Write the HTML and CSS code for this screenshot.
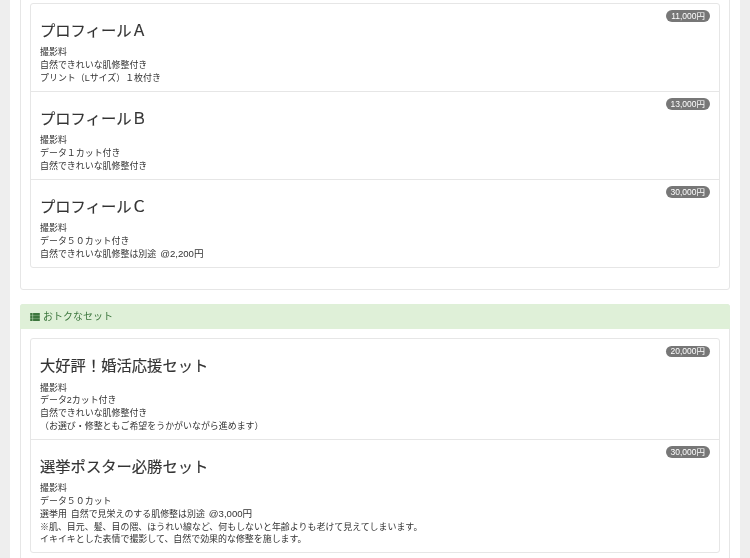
FILE: index.html
```html
<!DOCTYPE html>
<html lang="ja">
<head>
<meta charset="utf-8">
<title>料金</title>
<link rel="stylesheet" href="styles.css">
</head>
<body>
<main class="page">
  <section class="panel panel-first">
    <div class="panel-body">
      <ul class="list">
        <li class="item"><span class="badge">11,000円</span><h3 class="title">プロフィールＡ</h3><p class="desc">撮影料<br>自然できれいな肌修整付き<br>プリント（Lサイズ）１枚付き</p></li>
        <li class="item"><span class="badge">13,000円</span><h3 class="title">プロフィールＢ</h3><p class="desc">撮影料<br>データ１カット付き<br>自然できれいな肌修整付き</p></li>
        <li class="item"><span class="badge">30,000円</span><h3 class="title">プロフィールＣ</h3><p class="desc">撮影料<br>データ５０カット付き<br>自然できれいな肌修整は別途 <span class="price">@2,200円</span></p></li>
      </ul>
    </div>
  </section>
  <section class="panel">
    <div class="panel-heading">
      <svg class="icon" viewBox="0 0 12 10" aria-hidden="true"><path d="M0 0h3v3H0zM3.6 0H12v3H3.6zM0 3.5h3v3H0zM3.6 3.5H12v3H3.6zM0 7h3v3H0zM3.6 7H12v3H3.6z"/></svg>
      <span class="heading-text">おトクなセット</span>
    </div>
    <div class="panel-body">
      <ul class="list">
        <li class="item"><span class="badge">20,000円</span><h3 class="title">大好評！婚活応援セット</h3><p class="desc">撮影料<br>データ2カット付き<br>自然できれいな肌修整付き<br>（お選び・修整ともご希望をうかがいながら進めます）</p></li>
        <li class="item"><span class="badge">30,000円</span><h3 class="title">選挙ポスター必勝セット</h3><p class="desc">撮影料<br>データ５０カット<br>選挙用 自然で見栄えのする肌修整は別途 <span class="price">@3,000円</span><br>※肌、目元、髪、目の隈、ほうれい線など、何もしないと年齢よりも老けて見えてしまいます。<br>イキイキとした表情で撮影して、自然で効果的な修整を施します。</p></li>
      </ul>
    </div>
  </section>
</main>
</body>
</html>
```
FILE: styles.css
```css
html, body {
  margin: 0;
  padding: 0;
  height: 100%;
  overflow: hidden;
}
body {
  background: #eeeeee;
  font-family: "Liberation Sans", "Noto Sans CJK JP", sans-serif;
  font-size: 8.95px;
  line-height: 12.75px;
  color: #333333;
}
.page {
  margin: -8px 10px 0;
  padding: 0 10px 0 9.5px;
  background: #ffffff;
  filter: blur(0.4px);
}
.panel {
  margin-bottom: 14px;
  border: 1px solid #e6e6e6;
  border-radius: 3px;
  background: #ffffff;
}
.panel-heading {
  display: flex;
  align-items: center;
  gap: 3.5px;
  height: 25px;
  margin: -1px -1px 0;
  padding: 0 10.5px 0 10px;
  border-radius: 3px 3px 0 0;
  background: #dff0d8;
  color: #3c763d;
  font-size: 10px;
}
.heading-text {
  padding-top: 2px;
}
.icon {
  width: 10px;
  height: 8px;
  fill: #3c763d;
}
.panel-body {
  padding: 9.5px 9px 9px 9.5px;
}
.panel-heading + .panel-body {
  padding-top: 9px;
}
.list {
  margin: 0 0 12.5px;
  padding: 0;
  list-style: none;
  border: 1px solid #e6e6e6;
  border-radius: 3px;
}
.item {
  position: relative;
  padding: 6.25px 9px;
}
.item + .item {
  border-top: 1px solid #e6e6e6;
}
.badge {
  position: absolute;
  top: 6.5px;
  right: 9px;
  padding: 0.5px 5px 0;
  border-radius: 6px;
  background: #777777;
  color: #ffffff;
  font-size: 8.5px;
  line-height: 11px;
}
.title {
  margin: 12px 0 7.25px;
  font-size: 15.3px;
  font-weight: 400;
  line-height: 17px;
  -webkit-text-stroke: 0.15px #333333;
}
.desc {
  margin: 0;
  word-spacing: 1.5px;
}
.price {
  font-size: 9.6px;
}
```
